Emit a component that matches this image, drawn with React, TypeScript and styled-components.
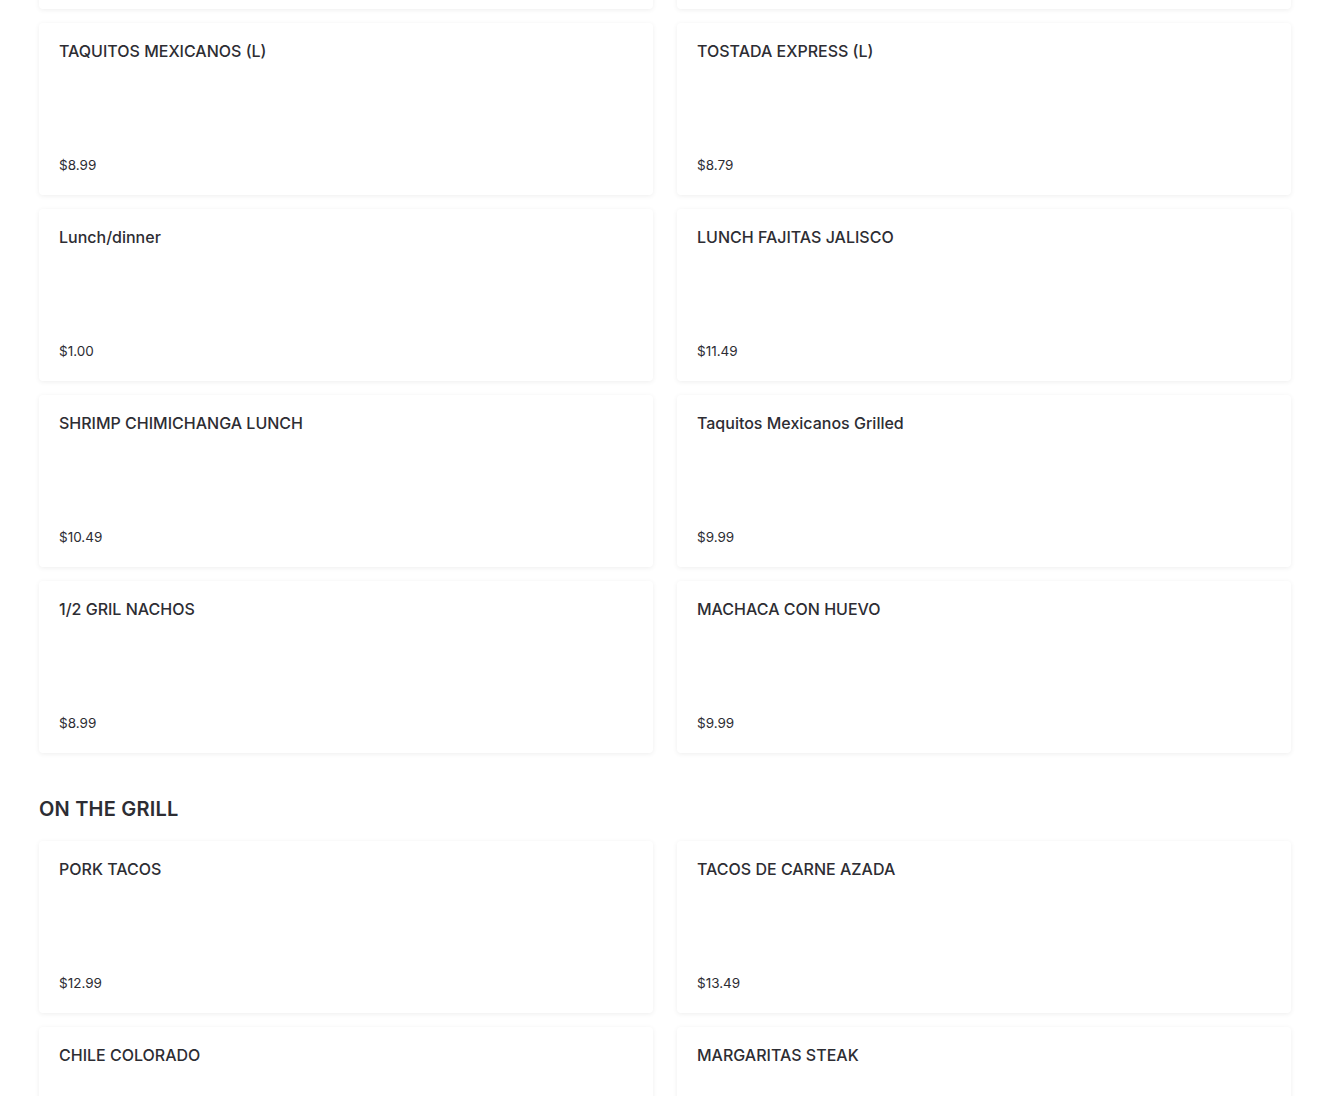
import React from 'react';
import styled, { createGlobalStyle } from 'styled-components';

const GlobalStyle = createGlobalStyle`
  body {
    margin: 0;
    background: #ffffff;
    font-family: Inter, "Noto Sans", sans-serif;
    color: #2d2d33;
  }
`;

interface Item {
  name: string;
  price: string;
}

interface Section {
  title?: string;
  items: Item[];
}

const sections: Section[] = [
  {
    items: [
      { name: '', price: '' },
      { name: '', price: '' },
      { name: 'TAQUITOS MEXICANOS (L)', price: '$8.99' },
      { name: 'TOSTADA EXPRESS (L)', price: '$8.79' },
      { name: 'Lunch/dinner', price: '$1.00' },
      { name: 'LUNCH FAJITAS JALISCO', price: '$11.49' },
      { name: 'SHRIMP CHIMICHANGA LUNCH', price: '$10.49' },
      { name: 'Taquitos Mexicanos Grilled', price: '$9.99' },
      { name: '1/2 GRIL NACHOS', price: '$8.99' },
      { name: 'MACHACA CON HUEVO', price: '$9.99' },
    ],
  },
  {
    title: 'ON THE GRILL',
    items: [
      { name: 'PORK TACOS', price: '$12.99' },
      { name: 'TACOS DE CARNE AZADA', price: '$13.49' },
      { name: 'CHILE COLORADO', price: '' },
      { name: 'MARGARITAS STEAK', price: '' },
    ],
  },
];

const Page = styled.div`
  padding: 0 39px;
  margin-top: -163px;
`;

const SectionTitle = styled.h2`
  margin: 42px 0 18px;
  font-size: 20px;
  line-height: 28px;
  font-weight: 600;
  letter-spacing: 0.2px;
`;

const Grid = styled.div`
  display: grid;
  grid-template-columns: 1fr 1fr;
  column-gap: 24px;
  row-gap: 14px;
`;

const Card = styled.div`
  box-sizing: border-box;
  height: 172px;
  padding: 20px 20px 22px;
  background: #fff;
  border-radius: 4px;
  box-shadow: 0 1px 5px rgba(0, 0, 0, 0.07);
  display: flex;
  flex-direction: column;
  justify-content: space-between;
`;

const Name = styled.div`
  font-size: 16px;
  line-height: 16px;
  font-weight: 500;
`;

const Price = styled.div`
  font-size: 13.5px;
  line-height: 16px;
  font-weight: 400;
`;

export default function App() {
  return (
    <>
      <GlobalStyle />
      <Page>
        {sections.map((s, i) => (
          <div key={i}>
            {s.title && <SectionTitle>{s.title}</SectionTitle>}
            <Grid>
              {s.items.map((it, j) => (
                <Card key={j}>
                  <Name>{it.name}</Name>
                  <Price>{it.price}</Price>
                </Card>
              ))}
            </Grid>
          </div>
        ))}
      </Page>
    </>
  );
}
